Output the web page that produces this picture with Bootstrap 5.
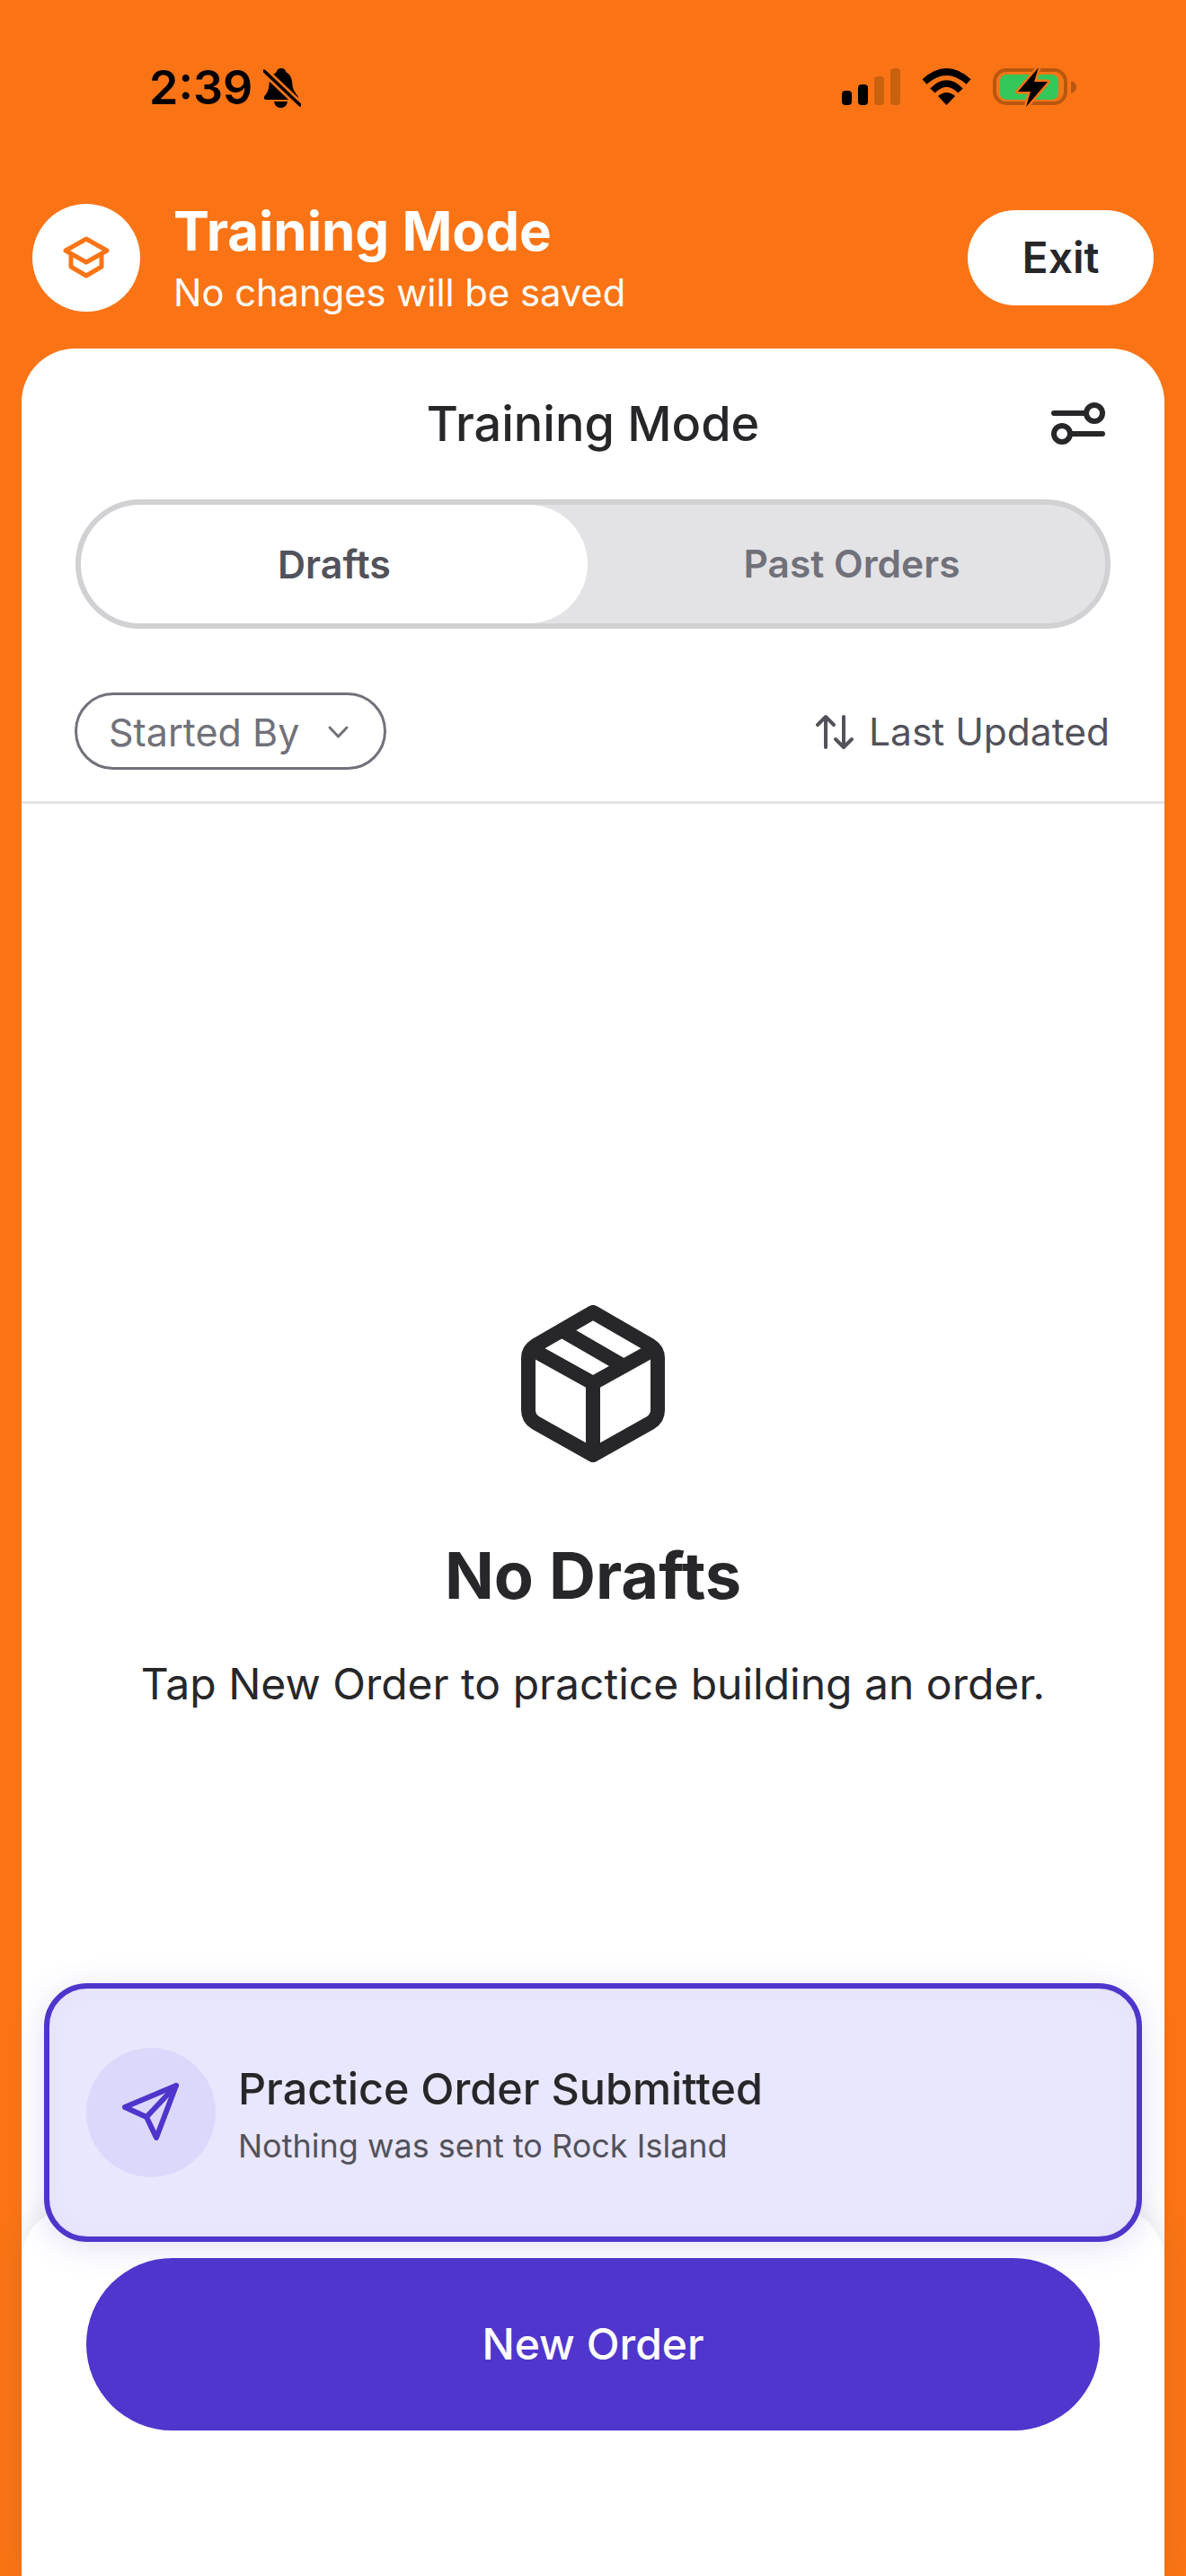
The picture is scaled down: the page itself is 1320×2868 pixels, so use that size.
<!DOCTYPE html>
<html lang="en">
<head>
  <meta charset="UTF-8" />
  <meta name="viewport" content="width=device-width, initial-scale=1.0"/>
  <title>Training Mode</title>
  <link href="https://cdn.jsdelivr.net/npm/bootstrap@5.3.3/dist/css/bootstrap.min.css" rel="stylesheet">
  <style>
    html, body { height: 100%; }
    body {
      background: #fa7416;
      font-family: Inter, "Liberation Sans", sans-serif;
      color: #27272a;
    }
    .phone { width: 1320px; height: 2868px; overflow: hidden; }

    /* status bar */
    .status-bar { height: 227px; padding: 68px 122px 0 166px; align-items: flex-start; }
    .clock { font-size: 52px; font-weight: 600; line-height: 60px; color: #000; width: 127px; }
    .bell { width: 42px; height: 46px; margin-top: 7px; }
    .status-icons { padding-top: 7px; }
    .status-icons svg { display: block; }

    /* training banner */
    .banner { height: 161px; padding: 0 36px 41px 36px; }
    .banner-logo { width: 120px; height: 120px; flex: none; background: #fff; }
    .banner-copy { margin-left: 37px; }
    .banner-title { font-size: 60px; font-weight: 700; line-height: 66px; color: #fff; }
    .banner-sub { font-size: 41.700px; line-height: 50px; color: #fff; margin-top: 11px; }
    .btn-exit {
      width: 207px; height: 106px; border-radius: 53px; border: 0;
      background: #fff; color: #27272a; font-size: 48px; font-weight: 600; padding: 0;
    }

    /* sheet */
    .sheet {
      margin: 0 24px; height: 2480px; background: #fff; position: relative;
      border-radius: 60px 60px 0 0;
    }
    .sheet-head { height: 168px; position: relative; }
    .sheet-title { font-size: 54px; font-weight: 500; line-height: 60px; }
    .filter-btn { position: absolute; right: 46px; top: 42px; }

    .segment {
      margin: 0 60px; height: 144px; padding: 0; background: #e3e3e6;
      border: 6px solid #d1d1d4; border-radius: 72px;
    }
    .segment-item {
      border-radius: 66px; font-size: 43px; font-weight: 600;
      color: #71717a; line-height: 132px; text-align: center;
    }
    .segment-item.active-tab { width: 564px; background: #fff; color: #52525b; }
    .segment-item.other-tab { flex: 1; padding-left: 12px; font-size: 42.500px; }

    .filter-row {
      height: 195px; margin: 0; padding: 71px 61px 38px 59px;
      border-bottom: 3px solid #e4e4e7;
    }
    .chip {
      height: 86px; width: 347px; padding: 2px 0 0 35px; background: #fff;
      border: 3px solid #71717a; border-radius: 43px; color: #71717a;
      font-size: 43px; line-height: 1;
    }
    .chip svg { margin-left: 31px; }
    .sort-label { font-size: 42.500px; color: #52525b; line-height: 50px; margin-top: 19px; }

    /* empty state */
    .empty-box { padding-top: 558px; text-align: center; }
    .empty-box svg { display: block; margin: 0 auto; }
    .empty-title { font-size: 72px; font-weight: 700; line-height: 80px; margin: 86px 0 0; color: #27272a; }
    .empty-text { font-size: 48px; line-height: 60px; margin: 51px 0 0; color: #27272a; }

    /* footer sheet */
    .foot-sheet {
      position: absolute; left: 0; right: 0; top: 2069px; bottom: 0;
      background: #fff; border-radius: 60px 60px 0 0; padding: 57px 72px 0;
      box-shadow: 0 -6px 30px rgba(39,39,42,.1);
    }
    .btn-new {
      display: block; width: 100%; height: 192px; border-radius: 96px; border: 0;
      background: #5036cd; color: #fff; font-size: 48px; font-weight: 500;
    }

    /* toast */
    .practice-toast {
      position: absolute; left: 25px; right: 25px; top: 1820px; height: 288px;
      background: #e9e7fd; border: 6px solid #4f35cc; border-radius: 48px;
      padding: 0 0 0 41px;
      box-shadow: 0 6px 36px rgba(80,53,204,.16), inset 0 0 26px rgba(80,53,204,.035);
    }
    .toast-icon { width: 144px; height: 144px; flex: none; background: #dbd8fc; }
    .toast-copy { margin-left: 25px; padding-top: 5px; }
    .toast-title { font-size: 48.500px; font-weight: 500; line-height: 58px; color: #27272a; }
    .toast-sub { font-size: 36px; line-height: 46px; color: #52525b; margin-top: 11px; }
  </style>
</head>
<body>
  <div class="phone">
    <!-- Status bar -->
    <div class="status-bar d-flex justify-content-between">
      <div class="d-flex">
        <span class="clock">2:39</span>
        <svg class="bell" viewBox="0 0 42 46">
          <path d="M20 1c3 0 5 2 5.500 4.500C31 8 32 14 32.500 20c.5 5 3 8 6 12 1.500 2 .5 4-2 4H3.500c-2.500 0-3.500-2-2-4 3-4 4.500-7 5-12 .5-6 2-11 8-14.500C15 3 17 1 20 1z" fill="#000"/>
          <path d="M12 38h15c-1 5-4 7-7.500 7S13 43 12 38z" fill="#000"/>
          <path d="M1 4 41 42" stroke="#fa7416" stroke-width="9"/>
          <path d="M1 4 41 42" stroke="#000" stroke-width="3.500" stroke-linecap="round"/>
        </svg>
      </div>
      <div class="status-icons d-flex">
        <svg width="261" height="46" viewBox="937 75 261 46">
          <rect x="937" y="101" width="11" height="16" rx="4" fill="#000"/>
          <rect x="955" y="94" width="11" height="23" rx="4" fill="#000"/>
          <rect x="973" y="85" width="11" height="32" rx="4" fill="#c9610f"/>
          <rect x="991" y="76" width="11" height="41" rx="4" fill="#c9610f"/>
          <path d="M1029 91Q1053.500 69 1078 91" fill="none" stroke="#000" stroke-width="7.500"/>
          <path d="M1038 101Q1053.500 85 1069 101" fill="none" stroke="#000" stroke-width="7.500"/>
          <path d="M1053.500 117 1044 107Q1053.500 99 1063 107Z" fill="#000"/>
          <rect x="1107" y="78" width="79" height="37" rx="13" fill="none" stroke="#b9560f" stroke-width="4"/>
          <path d="M1192 90c3 1 6 3 6 7s-3 6-6 7z" fill="#b9560f"/>
          <rect x="1113" y="83" width="65" height="28" rx="7" fill="#34c759"/>
          <path d="M1156 75 1133 102h14l-5 17 24-28h-15z" fill="#000" stroke="#fa7416" stroke-width="5" paint-order="stroke" stroke-linejoin="round"/>
        </svg>
      </div>
    </div>

    <!-- Banner -->
    <div class="banner d-flex align-items-center">
      <div class="banner-logo rounded-circle d-flex align-items-center justify-content-center">
        <svg width="80" height="80" viewBox="0 0 80 80" fill="none" stroke="#fa7416" stroke-width="5" stroke-linejoin="round" stroke-linecap="round">
          <path d="M40 19 63 32 40 45 17 32z"/>
          <path d="M23 37V50L40 60 57 50V37"/>
        </svg>
      </div>
      <div class="banner-copy flex-grow-1">
        <div class="banner-title">Training Mode</div>
        <div class="banner-sub">No changes will be saved</div>
      </div>
      <button class="btn-exit" type="button">Exit</button>
    </div>

    <!-- Sheet -->
    <div class="sheet">
      <div class="sheet-head d-flex align-items-center justify-content-center">
        <div class="sheet-title">Training Mode</div>
        <svg class="filter-btn" width="100" height="80" viewBox="0 0 100 80" fill="none" stroke="#27272a" stroke-width="6" stroke-linecap="round">
          <path d="M23 30H59"/>
          <circle cx="68" cy="30" r="9"/>
          <path d="M41 53H77"/>
          <circle cx="32" cy="53" r="9"/>
        </svg>
      </div>

      <div class="segment d-flex">
        <div class="segment-item active-tab">Drafts</div>
        <div class="segment-item other-tab">Past Orders</div>
      </div>

      <div class="filter-row d-flex align-items-start justify-content-between">
        <button class="chip d-flex align-items-center" type="button">
          <span>Started By</span>
          <svg width="25" height="16" viewBox="0 0 25 16" fill="none" stroke="#71717a" stroke-width="3" stroke-linecap="round" stroke-linejoin="round">
            <path d="M3 3l9.500 10L22 3"/>
          </svg>
        </button>
        <div class="d-flex align-items-center sort-label">
          <svg class="me-3" width="44" height="40" viewBox="0 0 44 40" fill="none" stroke="#52525b" stroke-width="4" stroke-linecap="round" stroke-linejoin="round">
            <path d="M12 37V3M3 12l9-9 9 9"/>
            <path d="M32 3v34M23 28l9 9 9-9"/>
          </svg>
          <span>Last Updated</span>
        </div>
      </div>

      <div class="empty-box">
        <svg width="160" height="175" viewBox="580 1453 160 175" fill="none" stroke="#27272a" stroke-width="16" stroke-linejoin="round">
          <path d="M660 1461 724 1498Q732 1503 732 1512V1570Q732 1579 724 1584L660 1620 596 1584Q588 1579 588 1570V1512Q588 1503 596 1498Z"/>
          <path d="M588 1500 660 1540 732 1500M660 1540V1620"/>
          <path d="M625 1481 694 1521"/>
        </svg>
        <h2 class="empty-title">No Drafts</h2>
        <p class="empty-text">Tap New Order to practice building an order.</p>
      </div>

      <div class="foot-sheet">
        <button class="btn-new" type="button">New Order</button>
      </div>

      <div class="practice-toast d-flex align-items-center">
        <div class="toast-icon rounded-circle d-flex align-items-center justify-content-center">
          <svg width="76" height="76" viewBox="130 2315 76 76" fill="none" stroke="#4f35cc" stroke-width="6" stroke-linejoin="round" stroke-linecap="round">
            <path d="M196 2323 139 2347 163 2358 174 2381Z"/>
            <path d="M196 2323 163 2358"/>
          </svg>
        </div>
        <div class="toast-copy">
          <div class="toast-title">Practice Order Submitted</div>
          <div class="toast-sub">Nothing was sent to Rock Island</div>
        </div>
      </div>
    </div>
  </div>
  <script src="https://cdn.jsdelivr.net/npm/bootstrap@5.3.3/dist/js/bootstrap.bundle.min.js"></script>
</body>
</html>
